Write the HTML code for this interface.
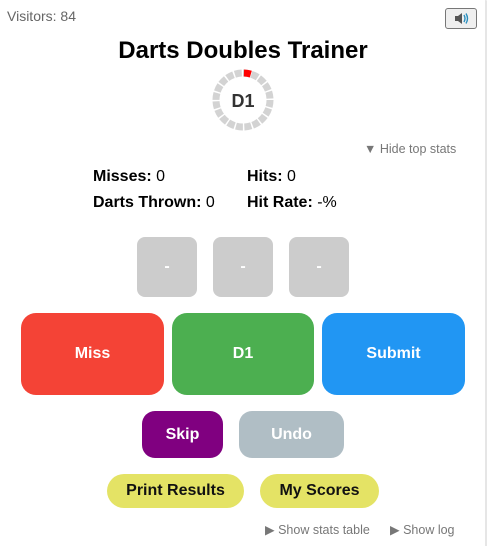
<!DOCTYPE html>
<html><head><style>
body{margin:0;width:490px;height:546px;background:#fff;font-family:"Liberation Sans",sans-serif;position:relative;overflow:hidden}
.a{position:absolute}
.b{position:absolute;display:flex;align-items:center;justify-content:center;color:#fff;font-weight:bold;font-size:16px}
.s{font-size:16px;color:#000}
</style></head><body>
<div class="a" style="right:0;top:0;width:3px;height:546px;border-left:2px solid #e6e6e6;border-top-right-radius:8px"></div>
<div class="a" style="left:7px;top:8px;font-size:14px;color:#666">Visitors: 84</div>
<div class="a" style="left:445px;top:8px;width:32px;height:21px;box-sizing:border-box;border:1px solid #777;border-radius:3px;background:#efefef">
<svg width="30" height="19" viewBox="0 0 30 19"><rect x="9" y="7" width="3" height="5" fill="#555"/><path d="M12 7 L16 4 L16 15 L12 12Z" fill="#555"/><path d="M18 6 Q20 9.5 18 13 M20 4.5 Q23 9.5 20 14.5" stroke="#2a8fbf" stroke-width="1.4" fill="none"/></svg></div>
<div class="a" style="left:0;width:486px;top:37px;text-align:center;font-size:24px;font-weight:bold">Darts Doubles Trainer</div>
<svg class="a" style="left:212px;top:69px" width="62" height="62" viewBox="0 0 62 62">
<circle cx="31" cy="31" r="27" fill="none" stroke="#d3d3d3" stroke-width="7" stroke-dasharray="7 1.48" transform="rotate(-90 31 31)"/>
<circle cx="31" cy="31" r="27" fill="none" stroke="#f00" stroke-width="7" stroke-dasharray="7 200" transform="rotate(-88 31 31)"/>
<text x="31" y="38" text-anchor="middle" font-family="Liberation Sans" font-weight="bold" font-size="18" fill="#333">D1</text></svg>
<div class="a" style="left:364px;top:142px;font-size:12.5px;color:#777">▼ Hide top stats</div>
<div class="a s" style="left:93px;top:168px"><b>Misses:</b> 0</div>
<div class="a s" style="left:247px;top:168px"><b>Hits:</b> 0</div>
<div class="a s" style="left:93px;top:194px"><b>Darts Thrown:</b> 0</div>
<div class="a s" style="left:247px;top:194px"><b>Hit Rate:</b> -%</div>
<div class="b" style="left:137px;top:237px;width:60px;height:60px;background:#ccc;border-radius:8px">-</div>
<div class="b" style="left:213px;top:237px;width:60px;height:60px;background:#ccc;border-radius:8px">-</div>
<div class="b" style="left:289px;top:237px;width:60px;height:60px;background:#ccc;border-radius:8px">-</div>
<div class="b" style="left:21px;top:313px;width:143px;height:82px;background:#f44336;border-radius:15px">Miss</div>
<div class="b" style="left:172px;top:313px;width:142px;height:82px;background:#4caf50;border-radius:15px">D1</div>
<div class="b" style="left:322px;top:313px;width:143px;height:82px;background:#2196f3;border-radius:15px">Submit</div>
<div class="b" style="left:142px;top:411px;width:81px;height:47px;background:#800080;border-radius:13px">Skip</div>
<div class="b" style="left:239px;top:411px;width:105px;height:47px;background:#b0bec5;border-radius:13px">Undo</div>
<div class="b" style="left:107px;top:474px;width:137px;height:34px;background:#e4e365;border-radius:17px;color:#111">Print Results</div>
<div class="b" style="left:260px;top:474px;width:119px;height:34px;background:#e4e365;border-radius:17px;color:#111">My Scores</div>
<div class="a" style="left:265px;top:522px;font-size:12.5px;color:#777">▶ Show stats table</div>
<div class="a" style="left:390px;top:522px;font-size:12.5px;color:#777">▶ Show log</div>
</body></html>
